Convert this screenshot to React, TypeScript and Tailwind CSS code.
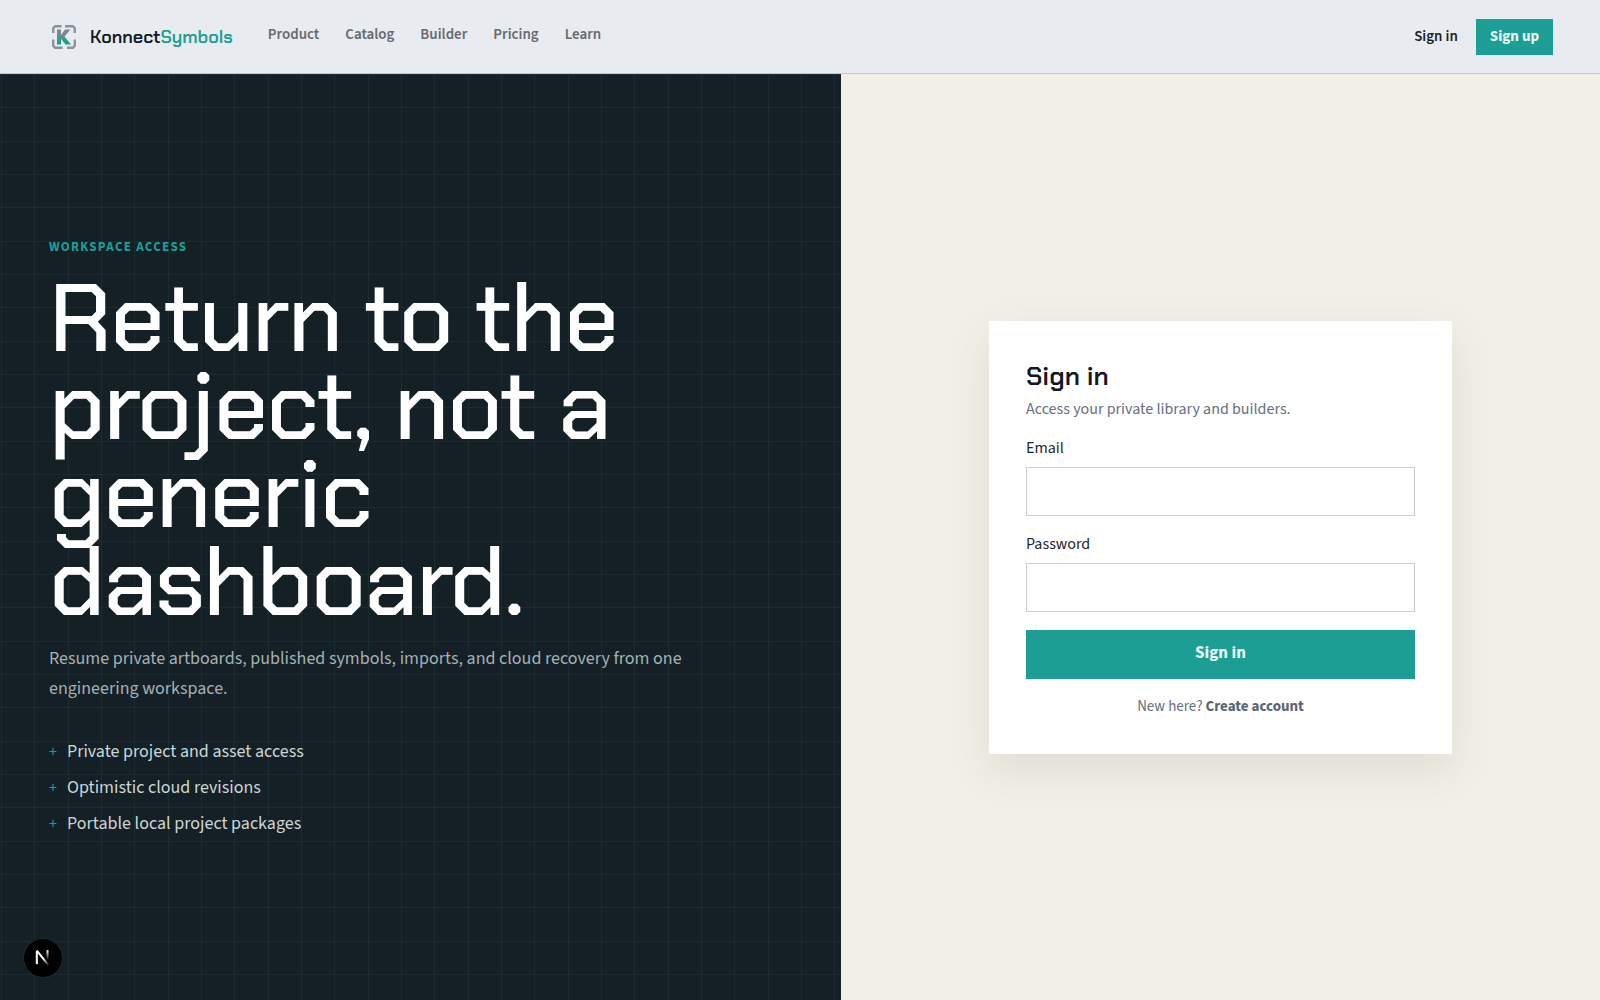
import React from "react";

const NAV = ["Product", "Catalog", "Builder", "Pricing", "Learn"];

const FEATURES = [
  "Private project and asset access",
  "Optimistic cloud revisions",
  "Portable local project packages",
];

function LogoMark() {
  return (
    <svg viewBox="0 0 24 24" className="h-6 w-6" fill="none" aria-hidden="true">
      <defs>
        <linearGradient id="mark" x1="0" y1="4" x2="0" y2="20" gradientUnits="userSpaceOnUse">
          <stop offset="0.3" stopColor="#7f8795" />
          <stop offset="0.85" stopColor="#1d9e8c" />
        </linearGradient>
      </defs>
      <g stroke="#8b919e" strokeWidth="2.4">
        <path d="M1.200 8V3.200L3.200 1.200H9.500" />
        <path d="M13 1.200H20.800L22.800 3.200V8" />
        <path d="M22.800 14.500V20.800L20.800 22.800H15" />
        <path d="M10.500 22.800H3.200L1.200 20.800V14.500" />
      </g>
      <path d="M5 4.500H9V19.500H5Z" fill="url(#mark)" />
      <path d="M13 4.500H18.500L12.500 11.500L19 19.500H13.500L7.500 12Z" fill="url(#mark)" />
    </svg>
  );
}

function Header() {
  return (
    <header className="flex h-[74px] items-center border-b border-[#bccbd3] bg-[#e8ecf1] pr-[47px] pl-[52px]">
      <a href="#" className="flex items-center gap-[14px] font-['Chakra_Petch','Inter',sans-serif] text-[18px] leading-6 font-semibold text-[#14191f]">
        <LogoMark />
        <span>
          Konnect<span className="text-[#1d9e94]">Symbols</span>
        </span>
      </a>
      <nav className="ml-[35px] flex gap-[26px] pb-1 text-[15px] leading-6 font-semibold text-[#666a70]">
        {NAV.map((item) => (
          <a key={item} href="#">
            {item}
          </a>
        ))}
      </nav>
      <div className="ml-auto flex items-center gap-[18px] text-[15px] leading-5">
        <a href="#" className="font-semibold text-[#1b2027]">
          Sign in
        </a>
        <a href="#" className="bg-[#1d9e94] px-[14px] py-2 font-bold text-[#eafaf7]">
          Sign up
        </a>
      </div>
    </header>
  );
}

function Intro() {
  return (
    <section className="flex flex-col justify-center bg-[#142025] bg-[image:linear-gradient(to_right,#1b2b30_1px,transparent_1px_33px,#1b2b30_33px_34px,transparent_34px_67px,#1b2b30_67px_68px,transparent_68px),linear-gradient(to_bottom,#1b2b30_1px,transparent_1px_33px,#1b2b30_33px_34px,transparent_34px_67px,#1b2b30_67px_68px,transparent_68px)] bg-[size:100px_100px] bg-[position:1px_0px] px-[49px]">
      <p className="text-[13px] leading-4 font-bold tracking-widest text-[#1d9e94]">WORKSPACE ACCESS</p>
      <h1 className="mt-5 max-w-[640px] font-['Chakra_Petch','Inter',sans-serif] text-[96px] leading-[88px] font-medium tracking-[-0.02em] text-white">
        Return to the project, not a generic dashboard.
      </h1>
      <p className="mt-[17px] max-w-[660px] text-[18px] leading-[30px] text-[#a3b1b4]">
        Resume private artboards, published symbols, imports, and cloud recovery from one engineering workspace.
      </p>
      <ul className="mt-9 flex flex-col gap-3 text-[18px] leading-6 text-[#cbd5d6]">
        {FEATURES.map((item) => (
          <li key={item} className="flex gap-[10px]">
            <span className="text-[16px] text-[#1d9e94]">+</span>
            {item}
          </li>
        ))}
      </ul>
    </section>
  );
}

function Field({ id, label, type }: { id: string; label: string; type: string }) {
  return (
    <div className="flex flex-col gap-2">
      <label htmlFor={id} className="text-[16px] leading-[21px] text-[#1f262d]">
        {label}
      </label>
      <input
        id={id}
        type={type}
        className="h-[49px] w-full border border-[#c8ccd4] bg-white px-3 text-[16px] outline-none focus:border-[#1d9e94]"
      />
    </div>
  );
}

function SignInCard() {
  return (
    <form
      onSubmit={(e) => e.preventDefault()}
      className="w-full max-w-[463px] bg-white p-[37px] shadow-[0_16px_40px_rgba(70,75,45,0.11)]"
    >
      <h2 className="font-['Chakra_Petch','Inter',sans-serif] text-[26px] leading-9 font-semibold text-[#12181e]">Sign in</h2>
      <p className="mt-[5px] text-[16px] leading-5 text-[#667080]">Access your private library and builders.</p>
      <div className="mt-[19px] flex flex-col gap-[18px]">
        <Field id="email" label="Email" type="email" />
        <Field id="password" label="Password" type="password" />
        <button type="submit" className="h-[49px] bg-[#1d9e94] text-[17px] font-bold text-[#eafaf7]">
          Sign in
        </button>
      </div>
      <p className="mt-[18px] text-center text-[15px] leading-5 text-[#667080]">
        New here?{" "}
        <a href="#" className="font-bold text-[#5a6575]">
          Create account
        </a>
      </p>
    </form>
  );
}

function DevBadge() {
  return (
    <button
      type="button"
      aria-label="Open developer tools"
      className="fixed bottom-[23px] left-6 flex h-[38px] w-[38px] items-center justify-center rounded-full bg-black shadow-[0_0_0_1px_#22282a]"
    >
      <svg viewBox="1 1 14 16" className="h-[18px] w-[18px]" fill="none" strokeWidth="1.800" aria-hidden="true">
        <defs>
          <linearGradient id="diag" x1="7" y1="8" x2="14" y2="15" gradientUnits="userSpaceOnUse">
            <stop offset="0.2" stopColor="#fff" />
            <stop offset="1" stopColor="#fff" stopOpacity="0" />
          </linearGradient>
          <linearGradient id="stem" x1="0" y1="2" x2="0" y2="11" gradientUnits="userSpaceOnUse">
            <stop stopColor="#fff" />
            <stop offset="1" stopColor="#fff" stopOpacity="0" />
          </linearGradient>
        </defs>
        <path d="M2.500 14.500V2.500" stroke="#fff" />
        <path d="M2.500 2.500L13 15.500" stroke="url(#diag)" />
        <path d="M12 2V11" stroke="url(#stem)" />
      </svg>
    </button>
  );
}

export default function App() {
  return (
    <div className="flex min-h-screen flex-col font-['Source_Sans_3','Noto_Sans_CJK_SC',sans-serif]">
      <Header />
      <main className="grid flex-1 grid-cols-[841fr_759fr]">
        <Intro />
        <section className="flex items-center justify-center bg-[#f2efe7] px-6">
          <SignInCard />
        </section>
      </main>
      <DevBadge />
    </div>
  );
}
